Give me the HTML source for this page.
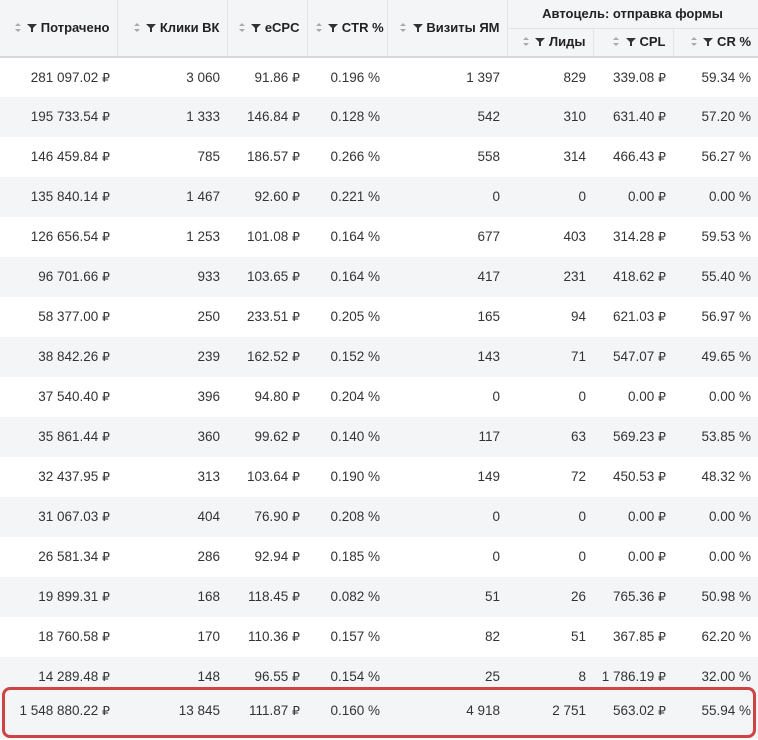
<!DOCTYPE html>
<html><head><meta charset="utf-8"><style>
*{margin:0;padding:0;box-sizing:border-box}
body{width:758px;height:740px;background:#fff;font-family:"Liberation Sans",sans-serif;color:#333;font-size:13.5px;position:relative;overflow:hidden}
table{border-collapse:collapse;position:absolute;left:0;top:0;width:758px;table-layout:fixed}
th{background:#f4f5f7;font-weight:bold;color:#222;font-size:13px;text-align:right;padding:0 7px;border-right:1px solid #e3e4e8;white-space:nowrap;line-height:16px}
th.g{text-align:center;height:28px;border-bottom:1px solid #e3e4e8}
tr.h2 th{height:29px}
thead tr:last-child th,th.r2{border-bottom:2px solid #d8d9dd}
td{height:40px;text-align:right;padding:0 7px;white-space:nowrap;line-height:16px}
tbody tr:nth-child(even) td{background:#f4f5f7}
tr.tot td{background:#f4f5f7;height:42px;vertical-align:top;padding-top:6px}
.r{font-family:"DejaVu Sans",sans-serif;font-size:12.5px;line-height:16px}
svg{vertical-align:-1px}
.sp{margin-right:2px}
.box{position:absolute;left:2px;top:687px;width:754px;height:51px;border:3px solid #cc4444;border-radius:8px}
</style></head><body>
<table>
<colgroup><col style="width:117px"><col style="width:110px"><col style="width:80px"><col style="width:80px"><col style="width:120px"><col style="width:86px"><col style="width:80px"><col style="width:85px"></colgroup>
<thead>
<tr><th rowspan="2" class="r2"><svg class="sp" width="8" height="11" viewBox="0 0 8 11"><path d="M1 4L4 1L7 4Z M1 7L4 10L7 7Z" fill="#aaa"/></svg> <svg width="10" height="10" viewBox="0 0 10 10"><path d="M0 1H10L6 5V9H4V5Z" fill="#333"/></svg> Потрачено</th><th rowspan="2" class="r2"><svg class="sp" width="8" height="11" viewBox="0 0 8 11"><path d="M1 4L4 1L7 4Z M1 7L4 10L7 7Z" fill="#aaa"/></svg> <svg width="10" height="10" viewBox="0 0 10 10"><path d="M0 1H10L6 5V9H4V5Z" fill="#333"/></svg> Клики ВК</th><th rowspan="2" class="r2"><svg class="sp" width="8" height="11" viewBox="0 0 8 11"><path d="M1 4L4 1L7 4Z M1 7L4 10L7 7Z" fill="#aaa"/></svg> <svg width="10" height="10" viewBox="0 0 10 10"><path d="M0 1H10L6 5V9H4V5Z" fill="#333"/></svg> eCPC</th><th rowspan="2" class="r2"><svg class="sp" width="8" height="11" viewBox="0 0 8 11"><path d="M1 4L4 1L7 4Z M1 7L4 10L7 7Z" fill="#aaa"/></svg> <svg width="10" height="10" viewBox="0 0 10 10"><path d="M0 1H10L6 5V9H4V5Z" fill="#333"/></svg> CTR %</th><th rowspan="2" class="r2"><svg class="sp" width="8" height="11" viewBox="0 0 8 11"><path d="M1 4L4 1L7 4Z M1 7L4 10L7 7Z" fill="#aaa"/></svg> <svg width="10" height="10" viewBox="0 0 10 10"><path d="M0 1H10L6 5V9H4V5Z" fill="#333"/></svg> Визиты ЯМ</th><th colspan="3" class="g">Автоцель: отправка формы</th></tr>
<tr class="h2"><th><svg class="sp" width="8" height="11" viewBox="0 0 8 11"><path d="M1 4L4 1L7 4Z M1 7L4 10L7 7Z" fill="#aaa"/></svg> <svg width="10" height="10" viewBox="0 0 10 10"><path d="M0 1H10L6 5V9H4V5Z" fill="#333"/></svg> Лиды</th><th><svg class="sp" width="8" height="11" viewBox="0 0 8 11"><path d="M1 4L4 1L7 4Z M1 7L4 10L7 7Z" fill="#aaa"/></svg> <svg width="10" height="10" viewBox="0 0 10 10"><path d="M0 1H10L6 5V9H4V5Z" fill="#333"/></svg> CPL</th><th style="border-right:0"><svg class="sp" width="8" height="11" viewBox="0 0 8 11"><path d="M1 4L4 1L7 4Z M1 7L4 10L7 7Z" fill="#aaa"/></svg> <svg width="10" height="10" viewBox="0 0 10 10"><path d="M0 1H10L6 5V9H4V5Z" fill="#333"/></svg> CR %</th></tr>
</thead>
<tbody>
<tr><td>281 097.02 <span class="r">₽</span></td><td>3 060</td><td>91.86 <span class="r">₽</span></td><td>0.196 %</td><td>1 397</td><td>829</td><td>339.08 <span class="r">₽</span></td><td>59.34 %</td></tr>
<tr><td>195 733.54 <span class="r">₽</span></td><td>1 333</td><td>146.84 <span class="r">₽</span></td><td>0.128 %</td><td>542</td><td>310</td><td>631.40 <span class="r">₽</span></td><td>57.20 %</td></tr>
<tr><td>146 459.84 <span class="r">₽</span></td><td>785</td><td>186.57 <span class="r">₽</span></td><td>0.266 %</td><td>558</td><td>314</td><td>466.43 <span class="r">₽</span></td><td>56.27 %</td></tr>
<tr><td>135 840.14 <span class="r">₽</span></td><td>1 467</td><td>92.60 <span class="r">₽</span></td><td>0.221 %</td><td>0</td><td>0</td><td>0.00 <span class="r">₽</span></td><td>0.00 %</td></tr>
<tr><td>126 656.54 <span class="r">₽</span></td><td>1 253</td><td>101.08 <span class="r">₽</span></td><td>0.164 %</td><td>677</td><td>403</td><td>314.28 <span class="r">₽</span></td><td>59.53 %</td></tr>
<tr><td>96 701.66 <span class="r">₽</span></td><td>933</td><td>103.65 <span class="r">₽</span></td><td>0.164 %</td><td>417</td><td>231</td><td>418.62 <span class="r">₽</span></td><td>55.40 %</td></tr>
<tr><td>58 377.00 <span class="r">₽</span></td><td>250</td><td>233.51 <span class="r">₽</span></td><td>0.205 %</td><td>165</td><td>94</td><td>621.03 <span class="r">₽</span></td><td>56.97 %</td></tr>
<tr><td>38 842.26 <span class="r">₽</span></td><td>239</td><td>162.52 <span class="r">₽</span></td><td>0.152 %</td><td>143</td><td>71</td><td>547.07 <span class="r">₽</span></td><td>49.65 %</td></tr>
<tr><td>37 540.40 <span class="r">₽</span></td><td>396</td><td>94.80 <span class="r">₽</span></td><td>0.204 %</td><td>0</td><td>0</td><td>0.00 <span class="r">₽</span></td><td>0.00 %</td></tr>
<tr><td>35 861.44 <span class="r">₽</span></td><td>360</td><td>99.62 <span class="r">₽</span></td><td>0.140 %</td><td>117</td><td>63</td><td>569.23 <span class="r">₽</span></td><td>53.85 %</td></tr>
<tr><td>32 437.95 <span class="r">₽</span></td><td>313</td><td>103.64 <span class="r">₽</span></td><td>0.190 %</td><td>149</td><td>72</td><td>450.53 <span class="r">₽</span></td><td>48.32 %</td></tr>
<tr><td>31 067.03 <span class="r">₽</span></td><td>404</td><td>76.90 <span class="r">₽</span></td><td>0.208 %</td><td>0</td><td>0</td><td>0.00 <span class="r">₽</span></td><td>0.00 %</td></tr>
<tr><td>26 581.34 <span class="r">₽</span></td><td>286</td><td>92.94 <span class="r">₽</span></td><td>0.185 %</td><td>0</td><td>0</td><td>0.00 <span class="r">₽</span></td><td>0.00 %</td></tr>
<tr><td>19 899.31 <span class="r">₽</span></td><td>168</td><td>118.45 <span class="r">₽</span></td><td>0.082 %</td><td>51</td><td>26</td><td>765.36 <span class="r">₽</span></td><td>50.98 %</td></tr>
<tr><td>18 760.58 <span class="r">₽</span></td><td>170</td><td>110.36 <span class="r">₽</span></td><td>0.157 %</td><td>82</td><td>51</td><td>367.85 <span class="r">₽</span></td><td>62.20 %</td></tr>
<tr><td>14 289.48 <span class="r">₽</span></td><td>148</td><td>96.55 <span class="r">₽</span></td><td>0.154 %</td><td>25</td><td>8</td><td>1 786.19 <span class="r">₽</span></td><td>32.00 %</td></tr>
<tr class="tot"><td>1 548 880.22 <span class="r">₽</span></td><td>13 845</td><td>111.87 <span class="r">₽</span></td><td>0.160 %</td><td>4 918</td><td>2 751</td><td>563.02 <span class="r">₽</span></td><td>55.94 %</td></tr>
</tbody></table>
<div class="box"></div>
</body></html>
